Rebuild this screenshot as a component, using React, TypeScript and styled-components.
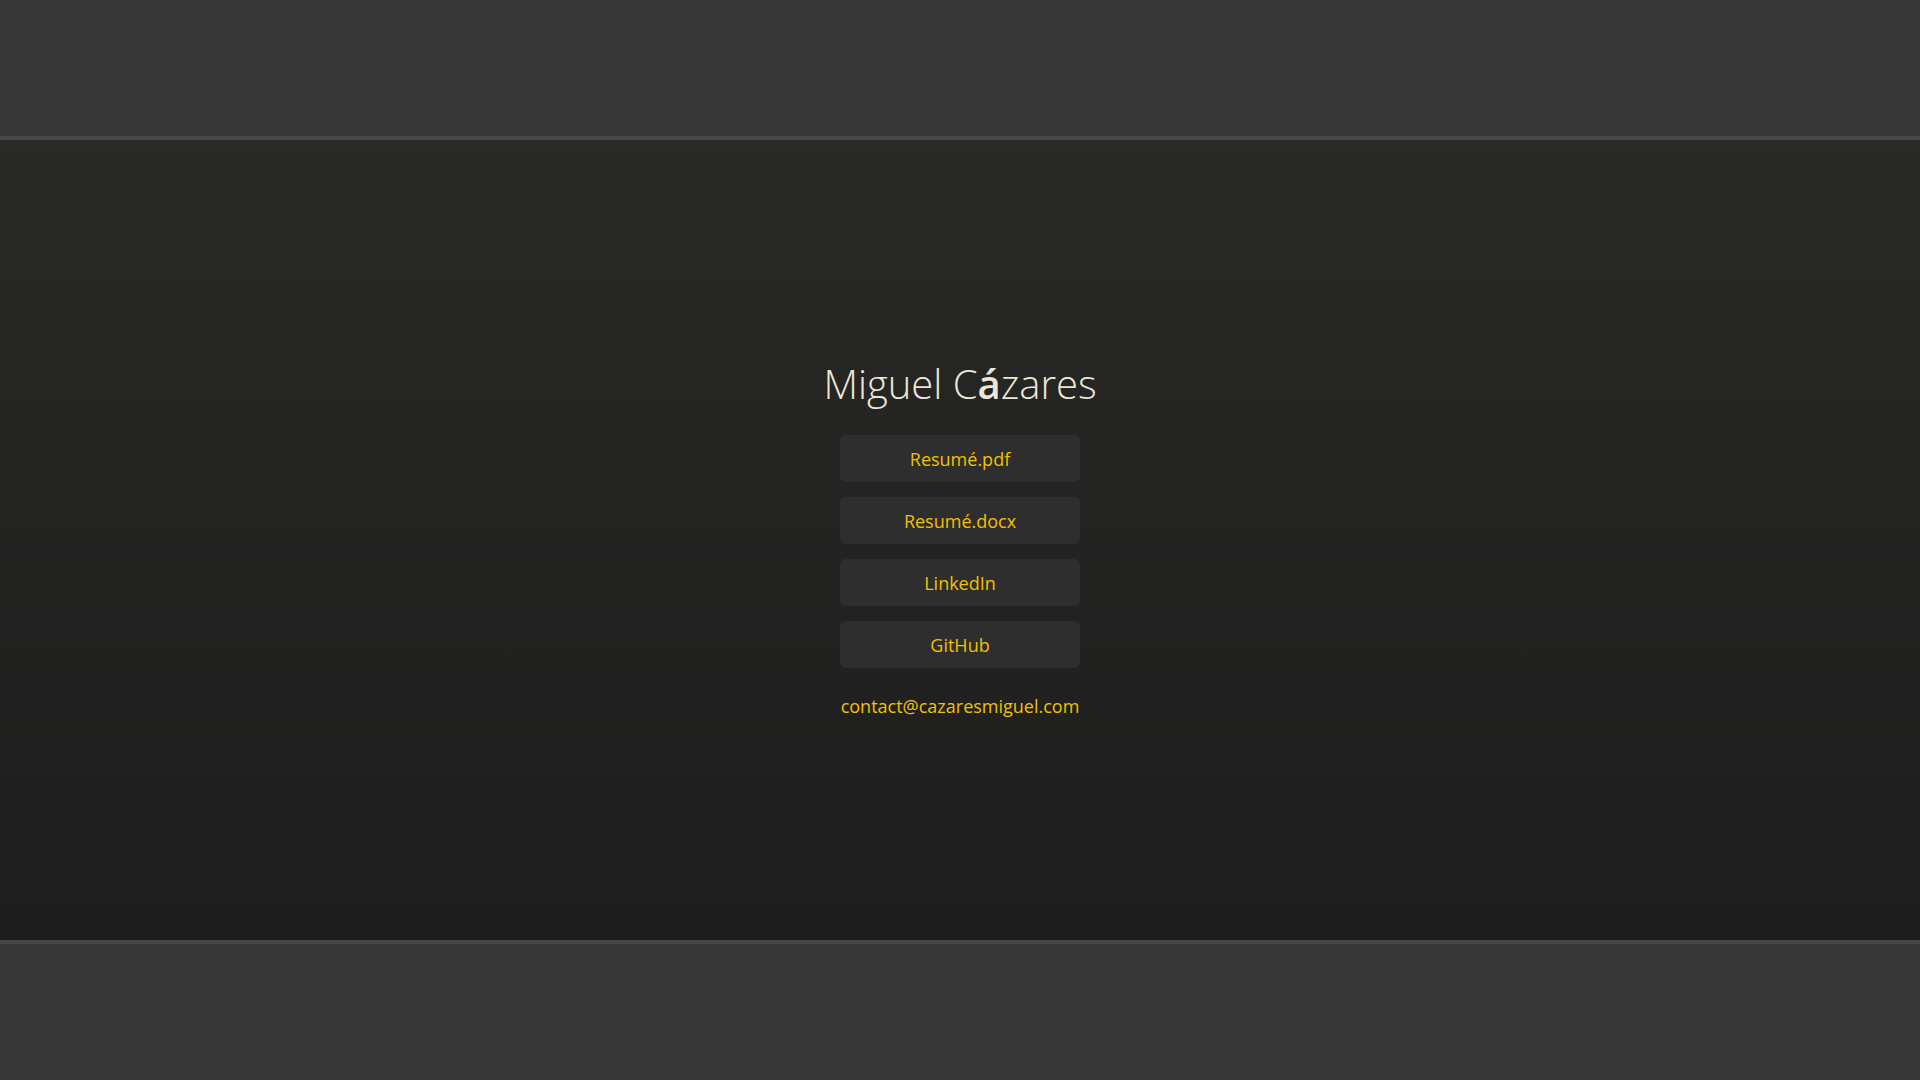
import styled, { createGlobalStyle } from "styled-components";

const GlobalStyle = createGlobalStyle`
  html, body {
    margin: 0;
    padding: 0;
    background: #353535;
  }
  body {
    font-family: "Open Sans", "Noto Sans", sans-serif;
  }
`;

const Page = styled.div`
  display: flex;
  flex-direction: column;
  height: 100vh;
  min-height: 1080px;
`;

const Band = styled.div<{ $edge: "top" | "bottom" }>`
  height: 136px;
  flex: none;
  background-color: #363636;
  background-image: repeating-linear-gradient(
    45deg,
    rgba(255, 255, 255, 0.012) 0 2px,
    rgba(0, 0, 0, 0.012) 2px 4px
  );
  ${({ $edge }) =>
    $edge === "top" ? "border-bottom: 4px solid #474747;" : "border-top: 4px solid #474747;"}
`;

const Main = styled.main`
  flex: 1;
  display: flex;
  flex-direction: column;
  align-items: center;
  justify-content: center;
  background: linear-gradient(180deg, #292927 0%, #1d1d1d 100%);
`;

const Name = styled.h1`
  margin: 0 0 27px;
  font-family: "Open Sans", sans-serif;
  font-weight: 300;
  font-size: 40px;
  line-height: 1.2;
  color: #ede6d6;
`;

const Accent = styled.span`
  font-weight: 600;
`;

const Links = styled.nav`
  display: flex;
  flex-direction: column;
  gap: 15px;
  width: 240px;
`;

const LinkButton = styled.a`
  display: flex;
  align-items: center;
  justify-content: center;
  height: 47px;
  border-radius: 6px;
  background: #2e2e2e;
  color: #f0c000;
  font-size: 18px;
  text-decoration: none;
`;

const Email = styled.a`
  margin-top: 25px;
  color: #f0c000;
  font-size: 18px;
  line-height: 27px;
  text-decoration: none;
`;

const LINKS = ["Resumé.pdf", "Resumé.docx", "LinkedIn", "GitHub"];

export default function App() {
  return (
    <>
      <GlobalStyle />
      <Page>
        <Band $edge="top" />
        <Main>
          <Name>
            Miguel C<Accent>á</Accent>zares
          </Name>
          <Links>
            {LINKS.map((label) => (
              <LinkButton key={label} href="#">
                {label}
              </LinkButton>
            ))}
          </Links>
          <Email href="#">contact@cazaresmiguel.com</Email>
        </Main>
        <Band $edge="bottom" />
      </Page>
    </>
  );
}
